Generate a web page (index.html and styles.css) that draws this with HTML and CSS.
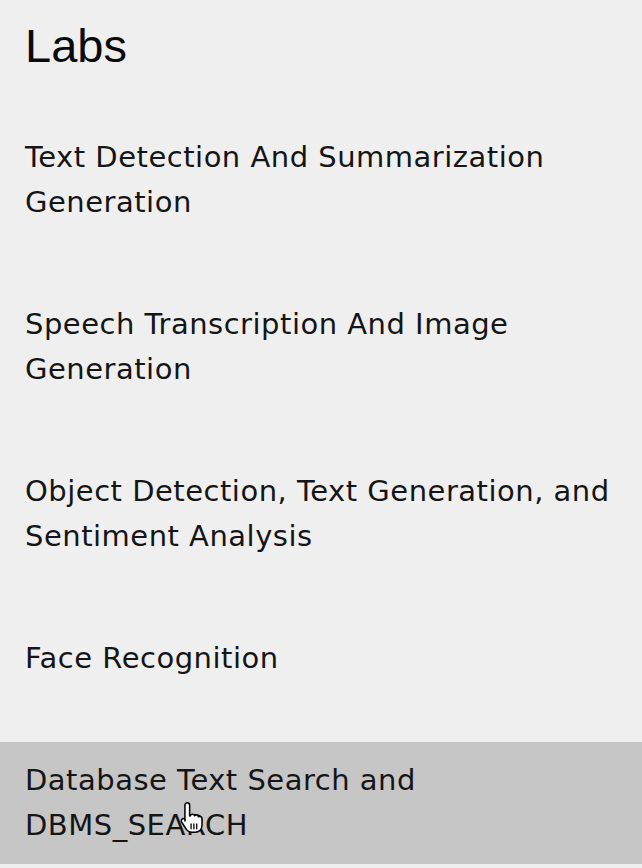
FILE: index.html
```html
<!DOCTYPE html>
<html>
<head>
<meta charset="utf-8">
<link rel="stylesheet" href="styles.css">
</head>
<body>
<nav class="sidebar">
  <h1 class="title">Labs</h1>
  <ul class="labs">
    <li class="lab">Text Detection And Summarization Generation</li>
    <li class="lab">Speech Transcription And Image Generation</li>
    <li class="lab">Object Detection, Text Generation, and Sentiment Analysis</li>
    <li class="lab">Face Recognition</li>
    <li class="lab lab-active">Database Text Search and DBMS_SEARCH<svg class="cursor" viewBox="0 0 20 28" width="24" height="33"><path d="M6 1.5c1.2 0 2 .9 2 2.1v9.2l.6-.3c.3-.9 1.1-1.4 2-1.3.8.1 1.4.6 1.6 1.3.4-.5 1-.8 1.7-.7.9.1 1.5.8 1.6 1.6.4-.3.9-.4 1.4-.3 1 .2 1.6 1 1.6 2v5.4c0 3.5-2.4 6-5.8 6H10c-2.2 0-3.6-.8-4.8-2.4L1.3 18c-.7-.9-.5-2.1.3-2.7.8-.6 1.9-.5 2.6.3L4 16.9V3.6c0-1.2.8-2.1 2-2.1z" fill="#fff" stroke="#000" stroke-width="1.3" stroke-linejoin="round"/><path d="M9.2 19v5M11.6 19v5M14 19v5" stroke="#000" stroke-width="1.1"/></svg></li>
  </ul>
</nav>
</body>
</html>
```
FILE: styles.css
```css
html, body {
  margin: 0;
  padding: 0;
  background: #efefef;
}
body {
  width: 642px;
  height: 868px;
  overflow: hidden;
}
.sidebar {
  padding: 0 0 0 25px;
}
.title {
  margin: 0;
  padding-top: 18px;
  font-family: "Liberation Sans", Arial, sans-serif;
  font-weight: normal;
  font-size: 47px;
  line-height: 56px;
  color: #0a0a0a;
}
.labs {
  list-style: none;
  margin: 45px 0 0 -25px;
  padding: 0;
  display: flex;
  flex-direction: column;
  gap: 45px;
}
.lab {
  padding: 16px 20px 16px 25px;
  font-family: "DejaVu Sans", Verdana, sans-serif;
  font-size: 29px;
  line-height: 45px;
  color: #151515;
  letter-spacing: 0.5px;
}
.lab-active {
  position: relative;
  background: #c6c6c6;
}
.cursor {
  position: absolute;
  left: 180px;
  top: 59px;
}
```
